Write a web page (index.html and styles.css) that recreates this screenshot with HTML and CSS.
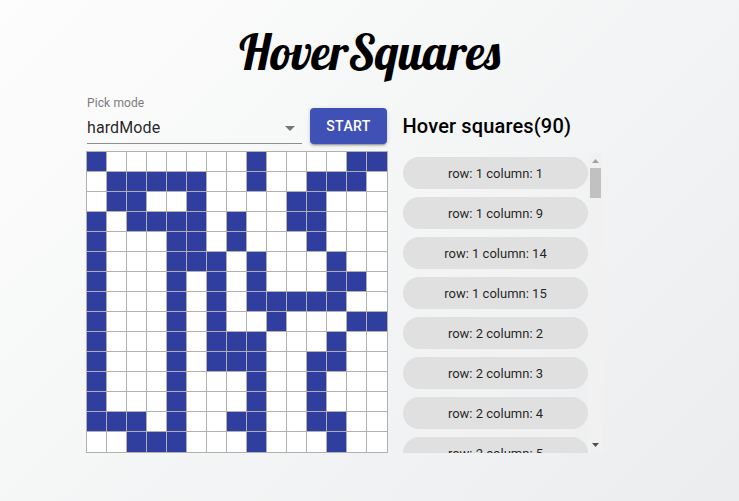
FILE: index.html
```html
<!DOCTYPE html>
<html lang="en">
<head>
<meta charset="utf-8">
<title>HoverSquares</title>
<link rel="stylesheet" href="styles.css">
</head>
<body>
<h1 class="title">HoverSquares</h1>
<main class="layout">
  <section class="game">
    <form class="controls">
      <div class="field">
        <span class="label">Pick mode</span>
        <div class="select"><span>hardMode</span><svg class="arrow" width="24" height="24" viewBox="0 0 24 24"><path d="M7 10l5 5 5-5z"/></svg></div>
      </div>
      <button class="start" type="button">START</button>
    </form>
    <div class="board" id="board"></div>
  </section>
  <section class="history">
    <h2 class="heading">Hover squares(90)</h2>
    <div class="scroll">
      <div class="chips" id="chips"></div>
      <div class="bar">
        <svg class="up" width="15" height="11"><path d="M4 10h7l-3.500-4z"/></svg>
        <div class="track"><div class="thumb"></div></div>
        <svg class="down" width="15" height="17"><path d="M4 7h7l-3.500 4z"/></svg>
      </div>
    </div>
  </section>
</main>
<script src="script.js"></script>
</body>
</html>
```
FILE: styles.css
```css
* { box-sizing: border-box; }
body {
  margin: 0;
  height: 501px;
  overflow: hidden;
  font-family: Roboto, "Liberation Sans", sans-serif;
  color: #000;
  background: linear-gradient(135deg, #fdfcfb 0%, #fdfdfd 0%, #ebedee 100%);
}
.title { margin: 0; padding-top: 22px; height: 95px; text-align: center; font: 400 48px/60px Lobster, "Liberation Serif", serif; }
.layout { display: flex; gap: 15px; padding-left: 86px; }
.game { width: 302px; }
.controls { display: flex; align-items: flex-end; gap: 8px; height: 49px; margin: 0 0 7px; padding-left: 1px; }
.field { width: 215px; height: 48px; border-bottom: 1px solid #8e8e8e; }
.label { display: block; font-size: 12px; line-height: 14px; letter-spacing: .11px; color: #7c7c7c; }
.select { display: flex; justify-content: space-between; align-items: center; margin-top: 6px; height: 24px; font-size: 16px; line-height: 22px; letter-spacing: .1px; color: rgba(0,0,0,.87); }
.arrow { fill: #757575; }
.start {
  width: 77px; height: 36px; padding: 0; border: 0; border-radius: 4px;
  background: #3f51b5; color: #fff;
  font: 500 14px/24px Roboto, sans-serif; letter-spacing: .4px;
  box-shadow: 0 3px 1px -2px rgba(0,0,0,.2), 0 2px 2px rgba(0,0,0,.14), 0 1px 5px rgba(0,0,0,.12);
}
.board { display: grid; grid-template: repeat(15, 20px) / repeat(15, 20px); width: 302px; border: 1px solid #b0b0b0; background: #fff; }
.cell { border-right: 1px solid #b0b0b0; border-bottom: 1px solid #b0b0b0; }
.cell:nth-child(15n) { border-right: 0; }
.cell:nth-child(n + 211) { border-bottom: 0; }
.on { background: #303f9f; }
.history { width: 200px; }
.heading { margin: 19px 0 0 -.5px; font-size: 20px; font-weight: 500; line-height: 24px; letter-spacing: .15px; white-space: nowrap; }
.scroll { display: flex; height: 300px; margin-top: 15px; }
.chips { width: 185px; overflow: hidden; }
.chip { margin: 4px 0 8px; height: 32px; border-radius: 16px; background: #e0e0e0; color: rgba(0,0,0,.87); font-size: 13px; line-height: 34px; text-align: center; }
.bar { width: 15px; background: #f1f1f1; display: flex; flex-direction: column; }
.track { flex: 1; padding-top: 4px; }
.thumb { width: 11px; height: 30px; margin-left: 2px; background: #c1c1c1; }
.up { fill: #a3a3a3; }
.down { fill: #505050; }
```
FILE: script.js
```js
const filled = [
  [1, 9, 14, 15],
  [2, 3, 4, 5, 6, 9, 12, 13, 14],
  [2, 3, 6, 11, 12],
  [1, 3, 4, 5, 6, 8, 11, 12],
  [1, 5, 6, 8, 12],
  [1, 5, 6, 7, 9, 13],
  [1, 5, 7, 9, 13, 14],
  [1, 5, 7, 9, 10, 11, 12, 13],
  [1, 5, 7, 10, 14, 15],
  [1, 5, 7, 8, 9, 13],
  [1, 5, 7, 8, 9, 12, 13],
  [1, 5, 9, 12],
  [1, 5, 9, 12],
  [1, 2, 3, 5, 8, 9, 12, 13],
  [3, 4, 5, 9, 13]
];
const board = document.getElementById('board');
for (const row of filled) {
  for (let c = 1; c <= 15; c++) {
    const cell = document.createElement('div');
    cell.className = row.includes(c) ? 'cell on' : 'cell';
    board.append(cell);
  }
}
const chips = document.getElementById('chips');
[[1, 1], [1, 9], [1, 14], [1, 15], [2, 2], [2, 3], [2, 4], [2, 5]].forEach(([r, c]) => {
  const chip = document.createElement('div');
  chip.className = 'chip';
  chip.textContent = `row: ${r} column: ${c}`;
  chips.append(chip);
});
```
